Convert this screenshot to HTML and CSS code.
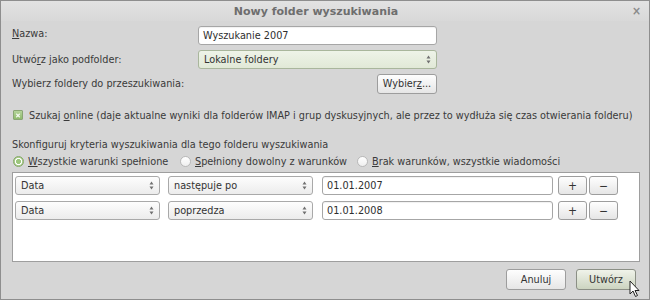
FILE: index.html
```html
<!DOCTYPE html>
<html lang="pl">
<head>
<meta charset="utf-8">
<title>Nowy folder wyszukiwania</title>
<link rel="stylesheet" href="styles.css">
</head>
<body>
<div class="window">
  <div class="titlebar">
    <span class="tb-side"></span>
    <span class="title">Nowy folder wyszukiwania</span>
    <span class="tb-side close">×</span>
  </div>
  <div class="body">
    <div class="form">
      <span class="lbl lbl-name"><u>N</u>azwa:</span>
      <div class="entry">Wyszukanie 2007</div>
      <span class="lbl">Utwó<u>r</u>z jako podfolder:</span>
      <div class="combo combo-focus"><span>Lokalne foldery</span><svg class="arrows" viewBox="0 0 5 9" width="5" height="9"><path d="M2.5 0.5 L4.5 3.5 L0.5 3.5 Z M0.5 5.5 L4.5 5.5 L2.5 8.5 Z" fill="#707070"/></svg></div>
      <span class="lbl">Wybierz foldery do przeszukiwania:</span>
      <div class="btn-cell"><span class="btn">Wybier<u>z</u>...</span></div>
    </div>

    <div class="check-row">
      <span class="checkbox"><svg viewBox="0 0 9 9" width="9" height="9"><path d="M2.5 2.5 L6.5 6.5 M6.5 2.5 L2.5 6.5" stroke="#f4f8ef" stroke-width="1.3"/></svg></span>
      <span>Szukaj <u>o</u>nline (daje aktualne wyniki dla folderów IMAP i grup dyskusyjnych, ale przez to wydłuża się czas otwierania folderu)</span>
    </div>

    <div class="section-label">Skonfiguruj kryteria wyszukiwania dla tego folderu wyszukiwania</div>
    <div class="radios">
      <span class="radio-item r1"><span class="radio on"></span><span><u>W</u>szystkie warunki spełnione</span></span>
      <span class="radio-item r2"><span class="radio"></span><span><u>S</u>pełniony dowolny z warunków</span></span>
      <span class="radio-item"><span class="radio"></span><span><u>B</u>rak warunków, wszystkie wiadomości</span></span>
    </div>

    <div class="criteria">
      <div class="crit-row">
        <div class="combo c1"><span>Data</span><svg class="arrows" viewBox="0 0 5 9" width="5" height="9"><path d="M2.5 0.5 L4.5 3.5 L0.5 3.5 Z M0.5 5.5 L4.5 5.5 L2.5 8.5 Z" fill="#707070"/></svg></div>
        <div class="combo c2"><span>następuje po</span><svg class="arrows" viewBox="0 0 5 9" width="5" height="9"><path d="M2.5 0.5 L4.5 3.5 L0.5 3.5 Z M0.5 5.5 L4.5 5.5 L2.5 8.5 Z" fill="#707070"/></svg></div>
        <div class="entry c3">01.01.2007</div>
        <span class="btn sq">+</span>
        <span class="btn sq">−</span>
      </div>
      <div class="crit-row">
        <div class="combo c1"><span>Data</span><svg class="arrows" viewBox="0 0 5 9" width="5" height="9"><path d="M2.5 0.5 L4.5 3.5 L0.5 3.5 Z M0.5 5.5 L4.5 5.5 L2.5 8.5 Z" fill="#707070"/></svg></div>
        <div class="combo c2"><span>poprzedza</span><svg class="arrows" viewBox="0 0 5 9" width="5" height="9"><path d="M2.5 0.5 L4.5 3.5 L0.5 3.5 Z M0.5 5.5 L4.5 5.5 L2.5 8.5 Z" fill="#707070"/></svg></div>
        <div class="entry c3">01.01.2008</div>
        <span class="btn sq">+</span>
        <span class="btn sq">−</span>
      </div>
    </div>

    <div class="actions">
      <span class="btn act">Anuluj</span>
      <span class="btn act default">Utwórz</span>
    </div>
  </div>
  <svg class="cursor" viewBox="0 0 12 18" width="12" height="18">
    <path d="M1 1 L1 14 L4 11 L6.5 16.5 L8.5 15.5 L6 10.5 L10 10.5 Z" fill="#fff" stroke="#222" stroke-width="1" stroke-linejoin="round"/>
  </svg>
</div>
</body>
</html>
```

FILE: styles.css
```css
* { box-sizing: border-box; }
html, body { margin: 0; padding: 0; }
body {
  width: 650px;
  height: 300px;
  overflow: hidden;
  font-family: "DejaVu Sans Condensed", "DejaVu Sans", sans-serif;
  font-size: 10.8px;
  color: #3a3a3a;
  background: #d6d6d6;
}
u { text-decoration: underline; text-underline-offset: 1px; }

.window {
  position: relative;
  width: 650px;
  height: 300px;
  border: 1px solid #8e8e8e;
  background: #d6d6d6;
  display: flex;
  flex-direction: column;
}

.titlebar {
  height: 20px;
  flex: none;
  display: grid;
  grid-template-columns: 40px 1fr 40px;
  align-items: center;
  background: linear-gradient(#e2e2e2, #d8d8d8);
}
.title {
  text-align: center;
  font-family: "DejaVu Sans", sans-serif;
  font-weight: bold;
  font-size: 11px;
  color: #6e6e6e;
  letter-spacing: 0;
  padding-right: 18px;
  padding-top: 1px;
}
.close {
  text-align: right;
  padding-right: 8px;
  font-size: 12px;
  color: #8a8a8a;
  font-weight: bold;
}

.body {
  flex: 1;
  padding: 5px 9px 0 11px;
  display: flex;
  flex-direction: column;
}

.form {
  display: grid;
  grid-template-columns: 186px 239px;
  grid-template-rows: 19px 19px 20px;
  row-gap: 5px;
  align-items: center;
}
.lbl { line-height: 14px; }
.lbl-name { margin-top: -3px; }
.btn-cell { display: flex; justify-content: flex-end; height: 20px; margin-top: -1px; }

.entry {
  height: 19px;
  background: #fff;
  border: 1px solid #a6a6a6;
  border-radius: 3px;
  padding: 0 4px;
  line-height: 17px;
  color: #2e2e2e;
  box-shadow: inset 0 1px 1px rgba(0,0,0,0.06);
}

.combo {
  height: 19px;
  border: 1px solid #a9a9a9;
  border-radius: 3px;
  background: linear-gradient(#fdfdfd, #ececec);
  display: flex;
  align-items: center;
  justify-content: space-between;
  padding: 0 5px 0 5px;
  color: #333;
}
.combo-focus {
  border-color: #a9b69c;
  background: linear-gradient(#eef3e8, #e1e9d7);
}
.arrows { display: block; flex: none; }

.btn {
  display: inline-flex;
  align-items: center;
  justify-content: center;
  height: 20px;
  padding: 0 6px;
  border: 1px solid #9d9d9d;
  border-radius: 3px;
  background: linear-gradient(#fefefe, #e6e6e6);
  color: #333;
}
.btn-cell .btn { width: 60px; }

.check-row {
  margin-top: 13px;
  height: 16px;
  display: flex;
  align-items: center;
  gap: 6px;
  padding-left: 1px;
  white-space: nowrap;
}
.checkbox {
  width: 10px;
  height: 10px;
  flex: none;
  border: 1px solid #8aa574;
  border-radius: 1px;
  background: linear-gradient(#b5d49b, #8fbb6c);
  display: flex;
  align-items: center;
  justify-content: center;
}
.checkbox svg { display: block; }

.section-label {
  margin-top: 14px;
  height: 16px;
  line-height: 16px;
}
.radios {
  height: 16px;
  display: flex;
  align-items: center;
  padding-left: 1px;
  white-space: nowrap;
}
.radio-item { display: inline-flex; align-items: center; gap: 4px; flex: none; }
.r1 { width: 167px; }
.r2 { width: 177px; }
.radio {
  width: 11px;
  height: 11px;
  border-radius: 50%;
  border: 1px solid #b9b9b9;
  background: linear-gradient(#ffffff, #efefef);
  flex: none;
}
.radio.on {
  border: 1px solid #86a86a;
  background: radial-gradient(circle, #9cc67c 0 2.2px, #ffffff 2.7px 3.4px, #a9cd8c 3.9px);
}

.criteria {
  margin-top: 3px;
  height: 90px;
  width: 628px;
  background: #fff;
  border: 1px solid #9e9e9e;
  padding: 3px 2px 0 2px;
  display: flex;
  flex-direction: column;
  gap: 6px;
}
.crit-row {
  display: flex;
  align-items: center;
  height: 19px;
}
.c1 { width: 145px; margin-right: 8px; }
.c2 { width: 145px; margin-right: 9px; }
.c3 { width: 231px; margin-right: 5px; }
.sq { width: 29px; height: 19px; padding: 0; margin-right: 2px; font-size: 12px; }

.actions {
  margin-top: 7px;
  display: flex;
  justify-content: flex-end;
  gap: 10px;
  padding-right: 4px;
}
.act { width: 60px; height: 21px; }
.default {
  border-color: #8b8f85;
  background: linear-gradient(#f0f3ea, #ccd4c0);
}

.cursor {
  position: absolute;
  left: 628px;
  top: 279px;
}
```
